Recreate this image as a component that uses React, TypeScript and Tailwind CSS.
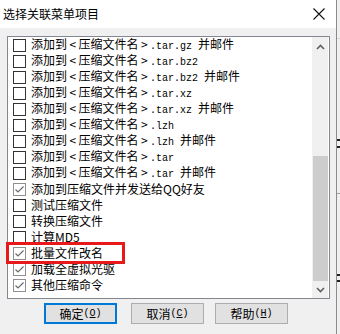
import React from 'react';

const cjk = "font-['Noto_Sans_CJK_SC','Noto_Sans',sans-serif]";
const mono = "font-['Liberation_Mono','DejaVu_Sans_Mono',monospace] text-[10px]";

type Item = { head: React.ReactNode; checked?: boolean; marked?: boolean };

const Angled: React.FC<{ c: string }> = ({ c }) => (
  <span className="inline-block w-[11.5px] text-center">{c}</span>
);

const Archive: React.FC<{ ext: string; mail?: boolean }> = ({ ext, mail }) => (
  <>
    添加到<Angled c="<" />压缩文件名<Angled c=">" />
    <span className={mono}>{ext}</span>
    {mail && <span className="ml-[6px]">并邮件</span>}
  </>
);

const items: Item[] = [
  { head: <Archive ext=".tar.gz" mail /> },
  { head: <Archive ext=".tar.bz2" /> },
  { head: <Archive ext=".tar.bz2" mail /> },
  { head: <Archive ext=".tar.xz" /> },
  { head: <Archive ext=".tar.xz" mail /> },
  { head: <Archive ext=".lzh" /> },
  { head: <Archive ext=".lzh" mail /> },
  { head: <Archive ext=".tar" /> },
  { head: <Archive ext=".tar" mail /> },
  { head: '添加到压缩文件并发送给QQ好友', checked: true },
  { head: '测试压缩文件' },
  { head: '转换压缩文件' },
  { head: '计算MD5' },
  { head: '批量文件改名', checked: true, marked: true },
  { head: '加载全虚拟光驱', checked: true },
  { head: '其他压缩命令', checked: true },
];

const CheckBox: React.FC<{ checked?: boolean }> = ({ checked }) => (
  <span
    className={`w-[13px] h-[13px] shrink-0 bg-white border flex items-center justify-center ${
      checked ? 'border-[#8f8f8f]' : 'border-[#333333]'
    }`}
  >
    {checked && (
      <svg width="11" height="11" viewBox="0 0 11 11">
        <path d="M1.5 5.5 L4 8 L9.5 2.5" fill="none" stroke="#6a6a6a" strokeWidth="1.2" />
      </svg>
    )}
  </span>
);

const Row: React.FC<Item> = ({ head, checked, marked }) => (
  <div className="relative h-[16px] flex items-center pl-[5px] gap-[5px]">
    <CheckBox checked={checked} />
    <span className="text-[12px] leading-[16px] text-black whitespace-nowrap">{head}</span>
    {marked && (
      <div className="absolute -left-[2px] top-[-3px] w-[119px] h-[22px] border-[3px] border-[#e8191b] z-10 pointer-events-none" />
    )}
  </div>
);

const Arrow: React.FC<{ up?: boolean }> = ({ up }) => (
  <svg width="9" height="6" viewBox="0 0 9 6">
    <path d={up ? 'M1 5 L4.5 1.5 L8 5' : 'M1 1 L4.5 4.5 L8 1'} fill="none" stroke="#606060" strokeWidth="1.6" />
  </svg>
);

const Button: React.FC<{ label: string; hot: string; primary?: boolean; className?: string }> = ({ label, hot, primary, className }) => (
  <button
    className={`w-[73px] h-[21px] bg-[#e1e1e1] flex items-center justify-center text-[12px] text-black ${
      primary ? 'border-2 border-[#0078d7]' : 'border border-[#adadad]'
    } ${className ?? ''}`}
  >
    <span>{label}</span>
    <span className={mono}>
      (<span className="underline underline-offset-1">{hot}</span>)
    </span>
  </button>
);

export default function App() {
  return (
    <div className={`w-[340px] h-[334px] flex bg-[#f0f0f0] overflow-hidden ${cjk}`}>
      <div className="w-[337px] h-full flex flex-col border-r border-[#8a8a8a]">
        {/* title bar */}
        <div className="h-[28px] bg-white flex items-center justify-between pl-[3px] pr-[11px]">
          <span className="text-[12px] text-black leading-none">选择关联菜单项目</span>
          <svg width="12" height="12" viewBox="0 0 12 12">
            <path d="M0.5 0.5 L11.5 11.5 M11.5 0.5 L0.5 11.5" stroke="#111" strokeWidth="1.1" />
          </svg>
        </div>

        <div className="flex-1 flex flex-col pl-[7px] pt-[8px]">
          {/* list box */}
          <div className="relative w-[323px] h-[263px] bg-white border border-[#828790] flex">
            <div className="flex-1 flex flex-col">
              {items.map((it, i) => (
                <Row key={i} {...it} />
              ))}
            </div>
            <div className="w-[16px] mr-[1px] bg-[#f0f0f0] flex flex-col">
              <div className="h-[19px] flex items-center justify-center">
                <Arrow up />
              </div>
              <div className="h-[100px]" />
              <div className="flex-1 bg-[#cdcdcd] mx-[0.5px]" />
              <div className="h-[17px] flex items-center justify-center">
                <Arrow />
              </div>
            </div>
          </div>

          {/* buttons */}
          <div className="flex mt-[4px]">
            <Button label="确定" hot="O" primary className="ml-[37px]" />
            <Button label="取消" hot="C" className="ml-[14px]" />
            <Button label="帮助" hot="H" className="ml-[11px]" />
          </div>
        </div>
      </div>

      {/* window behind */}
      <div className="flex-1 flex flex-col bg-[#f0f0f0]">
        <div className="h-[39px] border-b border-[#d9d9d9]" />
        <div className="h-[100px]" />
        <div className="h-[2px] bg-[#222]" />
        <div className="h-[5px]" />
        <div className="h-[2px] bg-[#222]" />
        <div className="h-[46px] border-b border-[#a0a0a0]" />
        <div className="h-[80px]" />
        <div className="h-[2px] bg-[#222]" />
        <div className="h-[4px]" />
        <div className="h-[2px] bg-[#222]" />
      </div>
    </div>
  );
}
